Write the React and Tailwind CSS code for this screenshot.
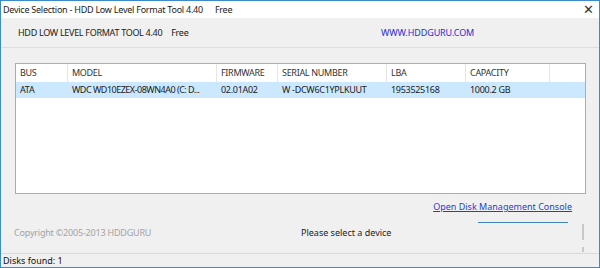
import React from 'react';

const columns = [
  { label: 'BUS', width: 'w-[52px]' },
  { label: 'MODEL', width: 'w-[149px]' },
  { label: 'FIRMWARE', width: 'w-[61px]' },
  { label: 'SERIAL NUMBER', width: 'w-[109px]' },
  { label: 'LBA', width: 'w-[79px]' },
  { label: 'CAPACITY', width: 'w-[84px]' },
];

const disks = [
  ['ATA', 'WDC WD10EZEX-08WN4A0 (C: D...', '02.01A02', 'W -DCW6C1YPLKUUT', '1953525168', '1000.2 GB'],
];

export default function App() {
  return (
    <div
      className="w-[600px] h-[268px] border border-[#3c8bc9] bg-[#f0f0f0] flex flex-col text-[9px] text-[#1a1a1a] overflow-hidden"
      style={{ fontFamily: '"Noto Sans", "Open Sans", sans-serif' }}
    >
      {/* Title bar */}
      <div className="h-[17px] bg-white flex items-center justify-between pl-[2px] pr-[5px]">
        <span className="tracking-[-0.25px]">
          Device Selection - HDD Low Level Format Tool 4.40<span className="ml-[12px]">Free</span>
        </span>
        <span className="text-[13px] leading-none text-[#333] font-light">✕</span>
      </div>

      {/* Header band */}
      <div className="h-[30px] border-b border-[#dedede] flex items-center pl-[17px] tracking-[-0.3px]">
        <span className="w-[363px]">
          HDD LOW LEVEL FORMAT TOOL 4.40<span className="ml-[9px]">Free</span>
        </span>
        <span className="text-[#2b2bd6] tracking-[-0.1px]">WWW.HDDGURU.COM</span>
      </div>

      {/* Device list */}
      <div className="mt-[15px] ml-[14px] w-[571px] h-[131px] border border-[#adadad] bg-white tracking-[-0.3px]">
        <div className="flex h-[18px] items-center text-[#333]">
          {columns.map((col) => (
            <div key={col.label} className={`${col.width} h-full flex items-center pl-[4px] border-r border-[#e5e5e5]`}>
              {col.label}
            </div>
          ))}
        </div>
        {disks.map((row, i) => (
          <div key={i} className="flex h-[16px] items-center bg-[#cce8ff]">
            {row.map((cell, j) => (
              <div
                key={j}
                className={`${columns[j].width} pl-[4px] whitespace-nowrap overflow-hidden ${j === 1 ? 'tracking-[-0.5px]' : ''}`}
              >
                {cell}
              </div>
            ))}
          </div>
        ))}
      </div>

      {/* Footer */}
      <div className="flex-1 flex flex-col relative">
        <div className="flex justify-end pr-[27px] mt-[6px]">
          <span className="text-[#1f3fd6] underline">Open Disk Management Console</span>
        </div>
        <div className="flex justify-end pr-[31px] mt-[8px]">
          <div className="w-[90px] h-px bg-[#3f84b8]" />
        </div>
        <div className="flex items-center mt-[3px] pl-[13px]">
          <span className="w-[287px] text-[#a3a3a3] tracking-[-0.2px]">Copyright ©2005-2013 HDDGURU</span>
          <span className="text-[#222]">Please select a device</span>
        </div>
        <div className="absolute right-[15px] top-[30px] w-[2px] h-[16px] bg-[#c8c8c8]" />
        <div className="absolute right-[15px] top-[53px] w-[2px] h-[5px] bg-[#c8c8c8]" />
      </div>

      {/* Status bar */}
      <div className="h-[14px] border-t border-[#dadada] flex items-center pl-[2px] text-[#111]">
        Disks found: 1
      </div>
    </div>
  );
}
